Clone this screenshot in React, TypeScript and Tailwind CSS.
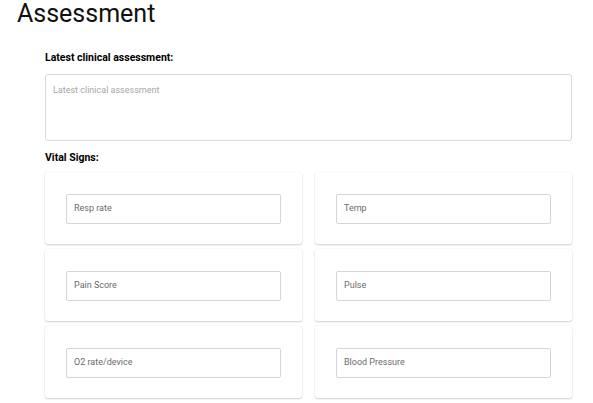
import React from "react";

const font = { fontFamily: "Roboto, 'Liberation Sans', sans-serif" };

function VitalCard({ label }: { label: string }) {
  return (
    <div className="h-[72px] rounded-[3px] bg-white px-[21px] pt-[22px] shadow-[0_1px_2px_rgba(0,0,0,0.18),0_0_2px_rgba(0,0,0,0.06)]">
      <div className="flex h-[30px] items-center rounded-[2px] border border-[#d6d6d6] px-[7px] text-[9px] text-[#6b6b6b]">
        {label}
      </div>
    </div>
  );
}

export default function App() {
  return (
    <div className="h-[403px] w-[593px] overflow-hidden bg-white text-black" style={font}>
      <h1 className="pl-[17px] text-[25px] leading-[28px] font-normal text-[#111]">Assessment</h1>
      <div className="px-[45px] pr-[21px]">
        <div className="mt-[23px] text-[10.5px] leading-[14px] font-bold">Latest clinical assessment:</div>
        <div className="mt-[9px] h-[67px] rounded-[3px] border border-[#d9d9d9] px-[7px] pt-[9px] text-[9px] leading-[12px] text-[#a6a6a6]">
          Latest clinical assessment
        </div>
        <div className="mt-[10px] text-[10.5px] leading-[14px] font-bold">Vital Signs:</div>
        <div className="mt-[7px] grid grid-cols-2 gap-x-[13px] gap-y-[5px]">
          <VitalCard label="Resp rate" />
          <VitalCard label="Temp" />
          <VitalCard label="Pain Score" />
          <VitalCard label="Pulse" />
          <VitalCard label="O2 rate/device" />
          <VitalCard label="Blood Pressure" />
        </div>
      </div>
    </div>
  );
}
